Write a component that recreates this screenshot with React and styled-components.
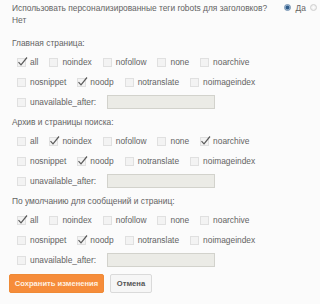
import React from "react";
import styled, { createGlobalStyle } from "styled-components";

const Global = createGlobalStyle`
  html, body { margin: 0; padding: 0; background: #fbfbfb; }
  body { font-family: "Liberation Sans", Arial, sans-serif; }
`;

const Page = styled.div`
  width: 320px;
  height: 304px;
  box-sizing: border-box;
  padding: 2px 0 0 12px;
  color: #636363;
  font-size: 8.4px;
  overflow: hidden;
`;

const Question = styled.p`
  margin: 0 0 11px 0;
  line-height: 12px;
  width: 308px;
`;

const QText = styled.span`
  margin-right: 17px;
`;

const Options = styled.span`
  white-space: nowrap;
`;

const Radio = styled.span`
  display: inline-block;
  width: 7px;
  height: 7px;
  box-sizing: border-box;
  border-radius: 50%;
  vertical-align: 0px;
  margin-right: 2px;
  border: 1px solid ${(p) => (p.$on ? "#6f8fb0" : "#cfcfcf")};
  background: ${(p) =>
    p.$on
      ? "radial-gradient(circle, #2f5c8a 0 1.6px, #9fb8d2 2.2px)"
      : "radial-gradient(circle, #fff, #e6e6e6)"};
`;

const RLabel = styled.span`
  margin-right: 2px;
`;

const Section = styled.section`
  margin-bottom: 4px;
`;

const Heading = styled.div`
  line-height: 12px;
  margin-bottom: 3px;
`;

const Row = styled.div`
  display: flex;
  align-items: center;
  height: 20px;
  padding-left: 5px;
`;

const Item = styled.label`
  display: flex;
  align-items: center;
  margin-right: 11px;
`;

const Box = styled.span`
  position: relative;
  width: 9px;
  height: 9px;
  box-sizing: border-box;
  border: 1px solid #e0e0e0;
  background: #f3f3f3;
  margin-right: 4px;
  flex: none;
`;

const Tick = styled.svg`
  position: absolute;
  left: -1px;
  top: -3px;
  width: 11px;
  height: 11px;
`;

const DateInput = styled.span`
  display: block;
  width: 108px;
  height: 14px;
  box-sizing: border-box;
  border: 1px solid #d2d2cc;
  background: #ebebe6;
`;

const Buttons = styled.div`
  display: flex;
  gap: 6px;
  margin-top: 2px;
  margin-left: -3px;
`;

const Button = styled.button`
  height: 19px;
  box-sizing: border-box;
  padding: 0;
  font-family: "Liberation Sans", Arial, sans-serif;
  font-size: 7.6px;
  font-weight: bold;
  border-radius: 2px;
  width: ${(p) => p.$w}px;
  border: 1px solid ${(p) => (p.$primary ? "#ef8a36" : "#dadada")};
  background: ${(p) => (p.$primary ? "#f68c3a" : "#f6f6f6")};
  color: ${(p) => (p.$primary ? "#fff0e0" : "#555")};
`;

function Check({ on, label }) {
  return (
    <Item>
      <Box>
        {on && (
          <Tick viewBox="0 0 11 11">
            <path d="M1.5 6.2 L4 8.8 L10 1.5" fill="none" stroke="#5a5a5a" strokeWidth="1.2" />
          </Tick>
        )}
      </Box>
      {label}
    </Item>
  );
}

const groups = [
  { title: "Главная страница:", checked: ["all", "noodp"] },
  { title: "Архив и страницы поиска:", checked: ["noindex", "noarchive", "noodp"] },
  { title: "По умолчанию для сообщений и страниц:", checked: ["all", "noodp"] },
];

const row1 = ["all", "noindex", "nofollow", "none", "noarchive"];
const row2 = ["nosnippet", "noodp", "notranslate", "noimageindex"];

export default function App() {
  return (
    <>
      <Global />
      <Page>
        <Question>
          <QText>Использовать персонализированные теги robots для заголовков?</QText>
          <Options>
            <Radio $on /> <RLabel>Да</RLabel> <Radio />
          </Options>{" "}
          <RLabel>Нет</RLabel>
        </Question>
        {groups.map((g) => (
          <Section key={g.title}>
            <Heading>{g.title}</Heading>
            <Row>
              {row1.map((n) => (
                <Check key={n} label={n} on={g.checked.includes(n)} />
              ))}
            </Row>
            <Row>
              {row2.map((n) => (
                <Check key={n} label={n} on={g.checked.includes(n)} />
              ))}
            </Row>
            <Row>
              <Check label="unavailable_after:" />
              <DateInput />
            </Row>
          </Section>
        ))}
        <Buttons>
          <Button $primary $w={95}>Сохранить изменения</Button>
          <Button $w={42}>Отмена</Button>
        </Buttons>
      </Page>
    </>
  );
}
